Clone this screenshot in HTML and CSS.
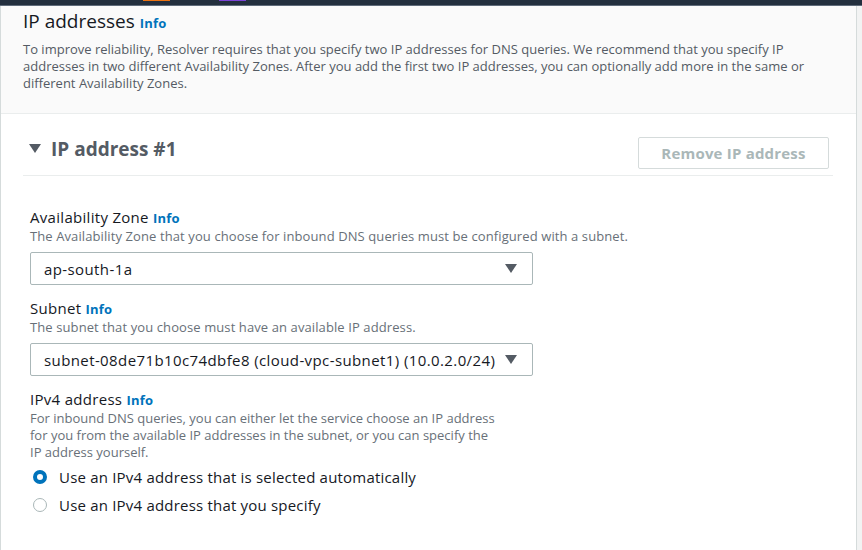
FILE: index.html
```html
<!DOCTYPE html>
<html>
<head>
<meta charset="utf-8">
<link rel="stylesheet" href="styles.css">
</head>
<body>
<div class="topbar">
  <span class="mark mark-orange"></span>
  <span class="mark mark-purple"></span>
</div>
<div class="page">
  <div class="panel">
    <div class="panel-header">
      <h2 class="title">IP addresses <a class="info info-lg">Info</a></h2>
      <p class="lead">To improve reliability, Resolver requires that you specify two IP addresses for DNS queries. We recommend that you specify IP addresses in two different Availability Zones. After you add the first two IP addresses, you can optionally add more in the same or different Availability Zones.</p>
    </div>
    <div class="panel-body">
      <div class="ip-head">
        <div class="ip-title"><span class="caret"></span>IP address #1</div>
        <button class="btn-remove">Remove IP address</button>
      </div>
      <div class="fields">
        <div class="field">
          <div class="label">Availability Zone <a class="info">Info</a></div>
          <div class="desc">The Availability Zone that you choose for inbound DNS queries must be configured with a subnet.</div>
          <div class="select"><span>ap-south-1a</span><span class="arrow"></span></div>
        </div>
        <div class="field">
          <div class="label">Subnet <a class="info">Info</a></div>
          <div class="desc">The subnet that you choose must have an available IP address.</div>
          <div class="select"><span>subnet-08de71b10c74dbfe8 (cloud-vpc-subnet1) (10.0.2.0/24)</span><span class="arrow"></span></div>
        </div>
        <div class="field">
          <div class="label">IPv4 address <a class="info">Info</a></div>
          <div class="desc desc-narrow">For inbound DNS queries, you can either let the service choose an IP address for you from the available IP addresses in the subnet, or you can specify the IP address yourself.</div>
          <div class="radios">
            <div class="radio-row"><span class="radio radio-on"></span>Use an IPv4 address that is selected automatically</div>
            <div class="radio-row"><span class="radio"></span>Use an IPv4 address that you specify</div>
          </div>
        </div>
      </div>
    </div>
  </div>
</div>
</body>
</html>
```
FILE: styles.css
```css
* { box-sizing: border-box; }
html, body { margin: 0; padding: 0; }
body {
  background: #f2f3f3;
  font-family: "Open Sans", "Noto Sans", sans-serif;
  color: #16191f;
  width: 862px;
  height: 550px;
  overflow: hidden;
}
.topbar {
  height: 6px;
  background: #232f3e;
  border-bottom: 1px solid #5f6b7a;
  display: flex;
  align-items: flex-start;
}
.mark { display: block; height: 1px; width: 27px; }
.mark-orange { background: #ec7211; margin-left: 143px; }
.mark-purple { background: #7b43d6; margin-left: 49px; }
.page { padding-right: 5px; }
.panel {
  background: #fff;
  border-left: 1px solid #d5dbdb;
  border-right: 1px solid #d5dbdb;
  height: 544px;
}
.panel-header {
  background: #fafafa;
  border-bottom: 1px solid #eaeded;
  padding: 3px 22px 0 22px;
  height: 108px;
}
.title {
  margin: 0;
  font-size: 19px;
  font-weight: 400;
  line-height: 24px;
  color: #16191f;
}
.info {
  color: #0073bb;
  font-weight: 700;
  font-size: 13px;
  letter-spacing: 0.2px;
  text-decoration: none;
}
.lead {
  margin: 6px 0 0 0;
  font-size: 13px;
  line-height: 17px;
  color: #545b64;
}
.panel-body { padding: 0 23px 0 22px; }
.ip-head {
  display: flex;
  align-items: center;
  justify-content: space-between;
  height: 62px;
  padding: 16px 4px 0 6px;
  border-bottom: 1px solid #eaeded;
}
.ip-title {
  display: flex;
  align-items: center;
  font-size: 19px;
  font-weight: 700;
  color: #545b64;
  margin-top: -8px;
}
.caret {
  width: 0; height: 0;
  border-left: 6px solid transparent;
  border-right: 6px solid transparent;
  border-top: 9px solid #545b64;
  margin-right: 10px;
}
.btn-remove {
  width: 191px;
  height: 32px;
  border: 1px solid #d5dbdb;
  border-radius: 2px;
  background: #fff;
  color: #aab7b8;
  font-family: inherit;
  font-size: 15px;
  letter-spacing: 0.2px;
  font-weight: 700;
}
.fields { padding: 31px 0 0 7px; display: flex; flex-direction: column; gap: 13px; }
.field { display: flex; flex-direction: column; }
.label { font-size: 15px; line-height: 20px; letter-spacing: 0.3px; }
.desc { font-size: 13px; line-height: 17px; color: #687078; letter-spacing: 0.1px; }
.desc-narrow { width: 472px; letter-spacing: 0; }
.select {
  margin-top: 7px;
  width: 503px;
  height: 33px;
  border: 1px solid #aab7b8;
  border-radius: 2px;
  display: flex;
  align-items: center;
  justify-content: space-between;
  padding: 0 15px 0 13px;
  font-size: 15px;
  letter-spacing: 0.4px;
}
.arrow {
  width: 0; height: 0;
  border-left: 6px solid transparent;
  border-right: 6px solid transparent;
  border-top: 9px solid #545b64;
}
.radios { display: flex; flex-direction: column; gap: 8px; margin-top: 6px; }
.radio-row { display: flex; align-items: center; font-size: 15px; line-height: 20px; letter-spacing: 0.2px; }
.radio {
  width: 14px; height: 14px;
  border-radius: 50%;
  border: 1px solid #aab7b8;
  margin: 0 12px 0 3px;
  background: #fff;
}
.radio-on { border: 4px solid #0073bb; }
```
